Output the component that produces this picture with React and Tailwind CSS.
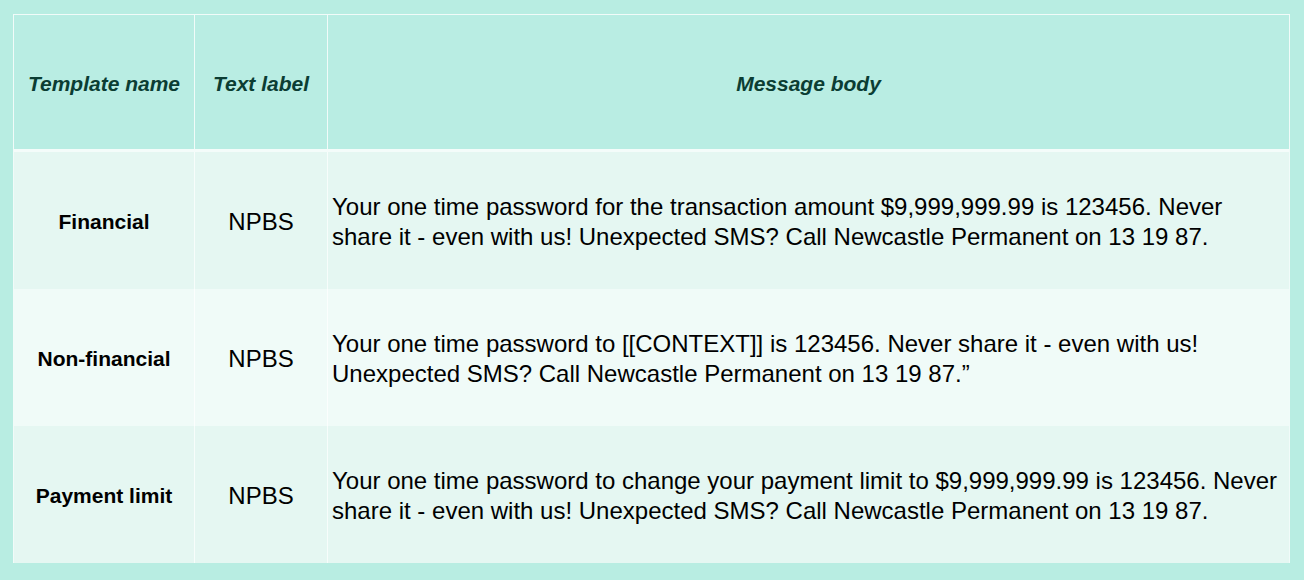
const rows = [
  {
    name: "Financial",
    label: "NPBS",
    lines: [
      "Your one time password for the transaction amount $9,999,999.99 is 123456. Never",
      "share it - even with us! Unexpected SMS? Call Newcastle Permanent on 13 19 87.",
    ],
    bg: "bg-[#e5f7f2]",
  },
  {
    name: "Non-financial",
    label: "NPBS",
    lines: [
      "Your one time password to [[CONTEXT]] is 123456. Never share it - even with us!",
      "Unexpected SMS? Call Newcastle Permanent on 13 19 87.\u201d",
    ],
    bg: "bg-[#f0fbf8]",
  },
  {
    name: "Payment limit",
    label: "NPBS",
    lines: [
      "Your one time password to change your payment limit to $9,999,999.99 is 123456. Never",
      "share it - even with us! Unexpected SMS? Call Newcastle Permanent on 13 19 87.",
    ],
    bg: "bg-[#e5f7f2]",
  },
];

export default function App() {
  return (
    <div
      className="w-[1304px] h-[580px] bg-[#b8ede2] pt-[14px] pl-[13px]"
      style={{ fontFamily: '"Liberation Sans", Arial, sans-serif' }}
    >
      <div className="w-[1277px] flex flex-col border-t border-l border-r border-white/80">
        <div className="flex h-[137px] bg-[#b9ede3] border-b-[3px] border-[#f4fcfa]">
          <div className="w-[181px] flex items-center justify-center pt-[4px] border-r border-white/80 text-[21px] font-bold italic text-[#0b3d33]">
            Template name
          </div>
          <div className="w-[133px] flex items-center justify-center pt-[4px] border-r border-white/80 text-[21px] font-bold italic text-[#0b3d33]">
            Text label
          </div>
          <div className="flex-1 flex items-center justify-center pt-[4px] text-[21px] font-bold italic text-[#0b3d33]">
            Message body
          </div>
        </div>
        {rows.map((r) => (
          <div key={r.name} className={`flex h-[137px] ${r.bg}`}>
            <div className="w-[181px] flex items-center justify-center pt-[2px] border-r border-white/70 text-[21px] font-bold text-black">
              {r.name}
            </div>
            <div className="w-[133px] flex items-center justify-center pt-[2px] border-r border-white/70 text-[24px] text-black">
              {r.label}
            </div>
            <div className="flex-1 flex flex-col justify-center pl-[4px] pt-[2px] text-[24px] leading-[30px] whitespace-nowrap text-black">
              {r.lines.map((l) => (
                <div key={l}>{l}</div>
              ))}
            </div>
          </div>
        ))}
      </div>
    </div>
  );
}
